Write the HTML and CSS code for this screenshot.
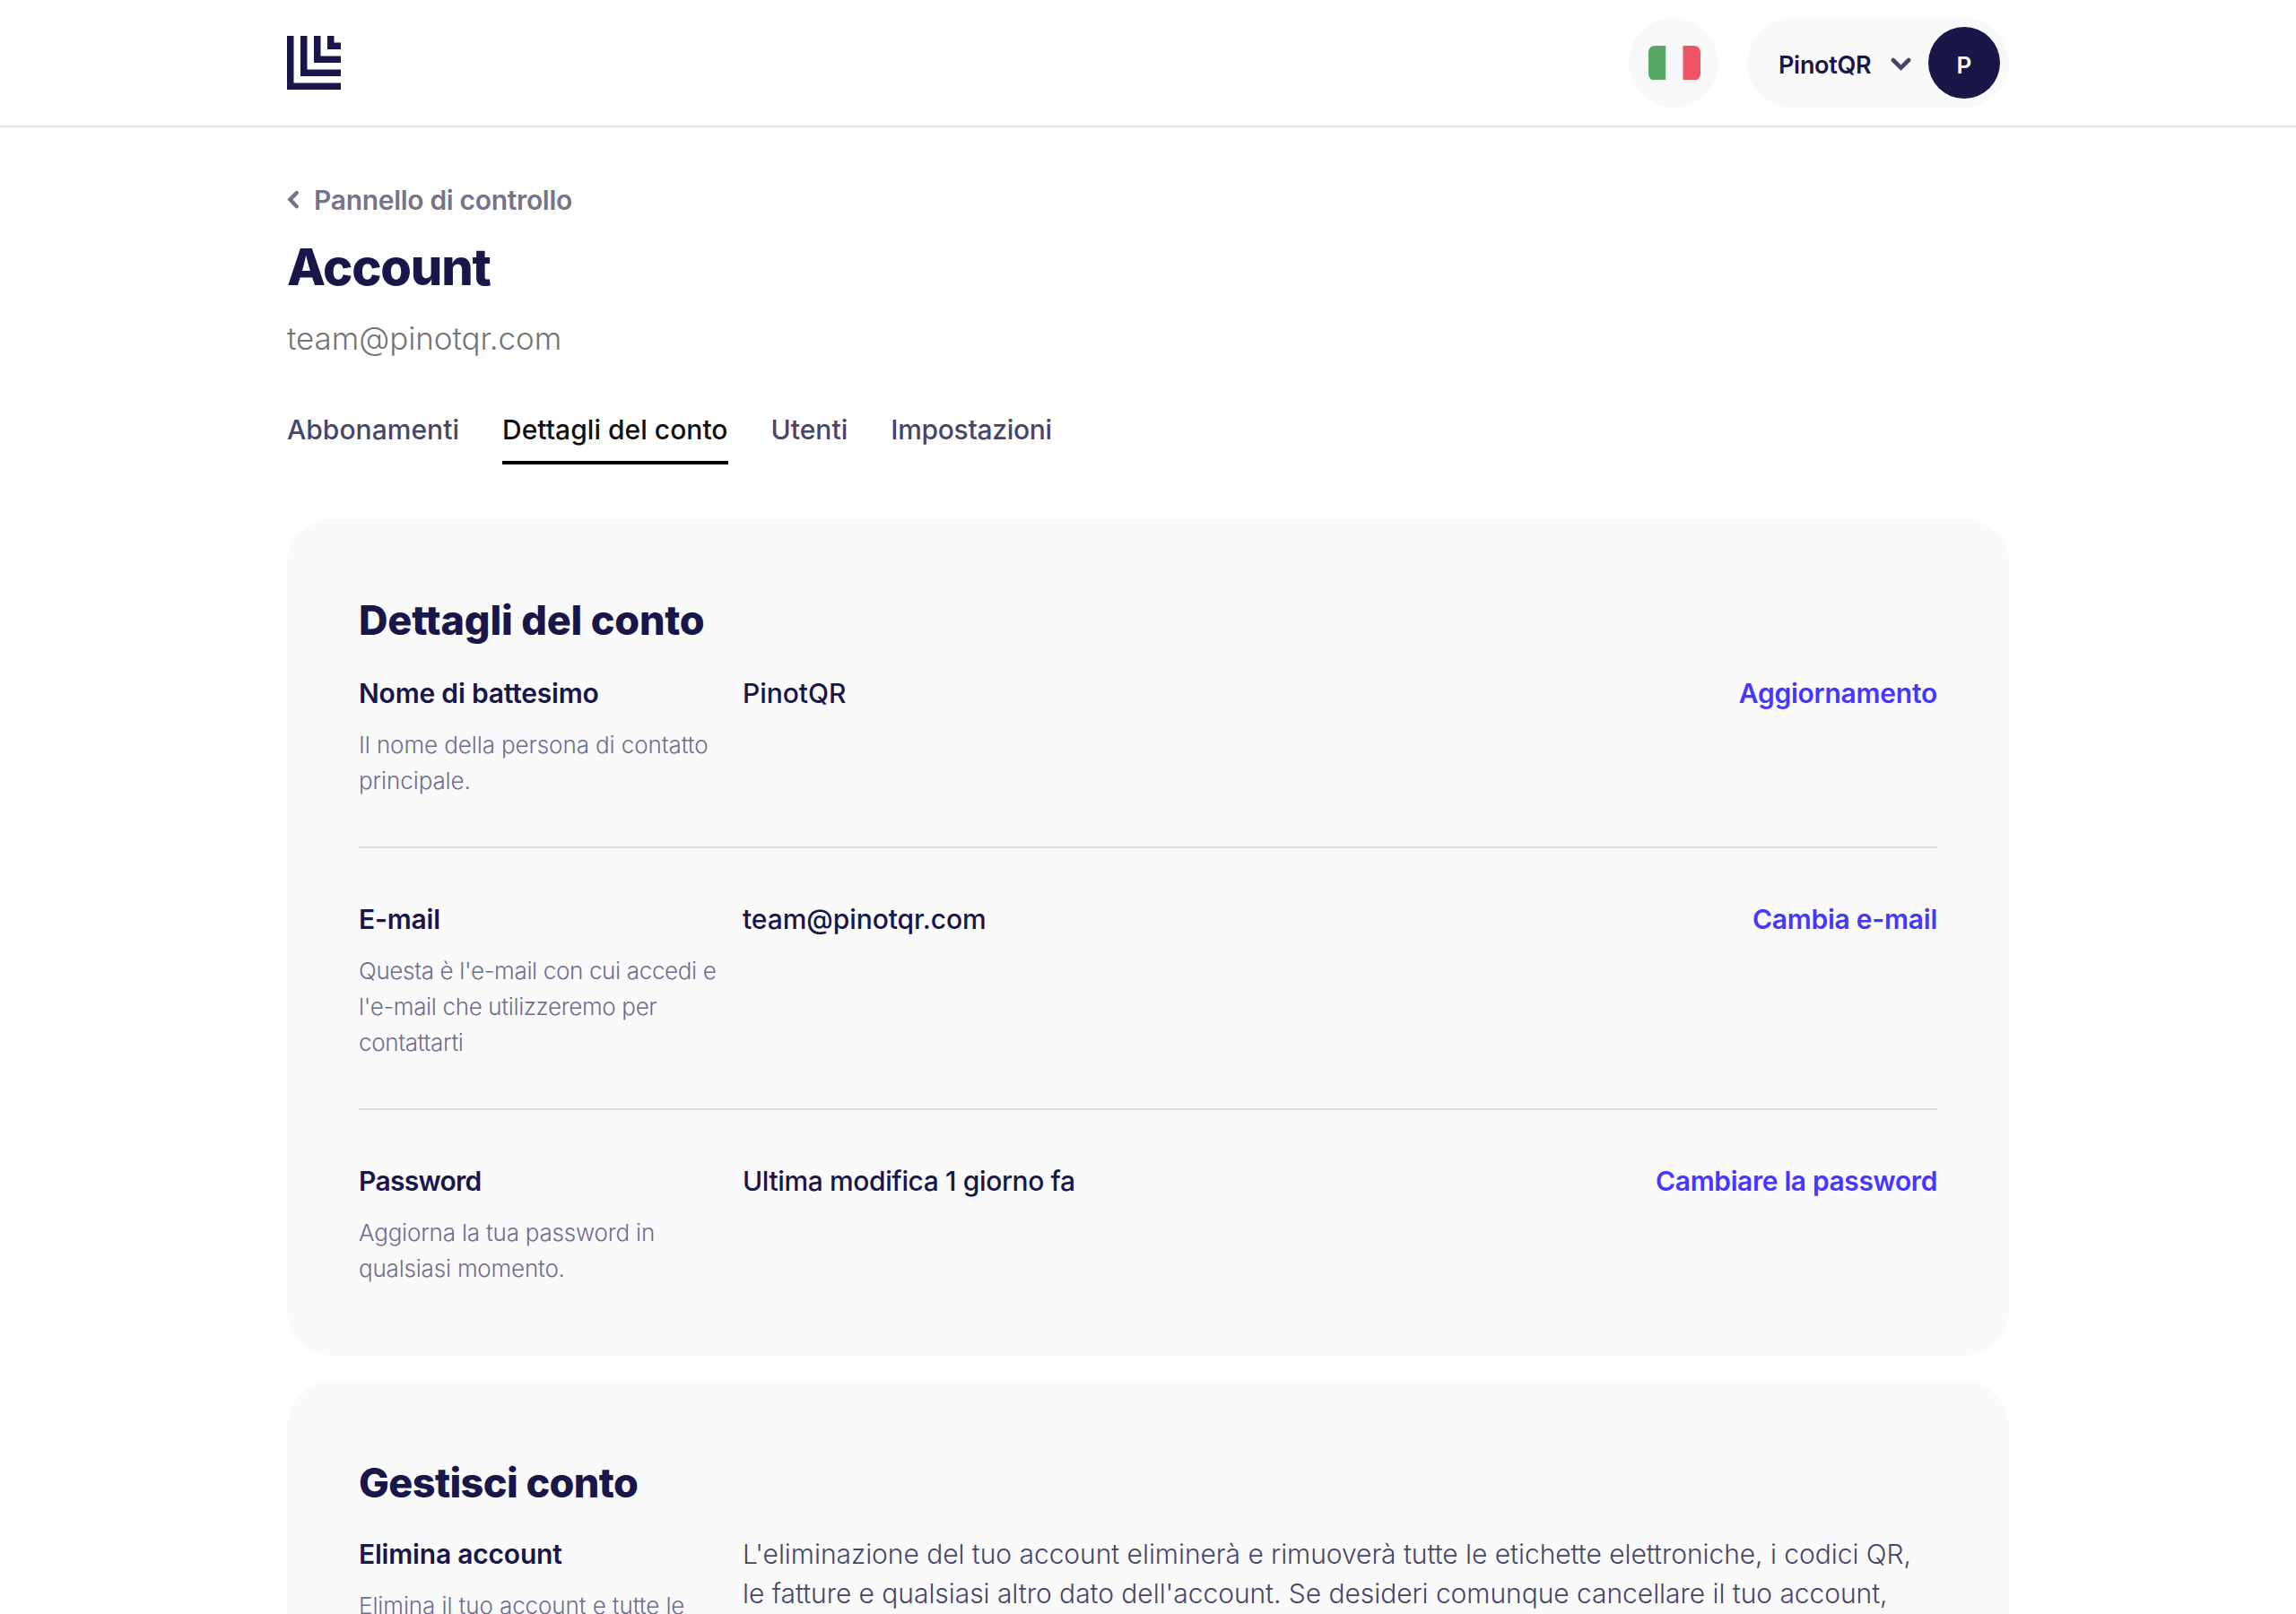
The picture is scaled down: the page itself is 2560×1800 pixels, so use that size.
FILE: index.html
```
<!DOCTYPE html>
<html lang="it">
<head>
  <meta charset="UTF-8" />
  <meta name="viewport" content="width=device-width, initial-scale=1.0"/>
  <title>Account</title>
  <link rel="stylesheet" href="styles.css">
</head>
<body>

  <header class="header">
    <a class="logo" href="#">
      <svg width="60" height="60" viewBox="0 0 60 60" fill="#19164a">
        <path d="M0 0h7.5v52.5H60V60H0z"/>
        <path d="M15 0h7.5v37.5H60V45H15z"/>
        <path d="M30 0h7.5v22.5H60V30H30z"/>
        <path d="M45 0h7.5v7.5H60V15H45z"/>
      </svg>
    </a>
    <div class="header-right">
      <button class="language">
        <svg width="58" height="38.5" viewBox="0 0 58 38.5">
          <path fill="#57a863" d="M7 0h12.5v38.5H7a7 7 0 0 1-7-7V7a7 7 0 0 1 7-7z"/>
          <path fill="#f5f7fb" d="M19.5 0h19v38.5h-19z"/>
          <path fill="#ee5564" d="M38.5 0H51a7 7 0 0 1 7 7v24.5a7 7 0 0 1-7 7H38.5z"/>
        </svg>
      </button>
      <button class="user-menu">
        <span class="user-name">PinotQR</span>
        <svg class="chevron" width="23" height="16" viewBox="0 0 23 16" fill="none" stroke="#484266" stroke-width="4.6" stroke-linecap="round">
          <path d="M2.8 3l8.7 8.6L20.2 3"/>
        </svg>
        <span class="avatar">P</span>
      </button>
    </div>
  </header>

  <main class="container">
    <a class="back" href="#">
      <svg width="14" height="22" viewBox="0 0 14 22" fill="none" stroke="#767489" stroke-width="4.4" stroke-linecap="round">
        <path d="M10.8 3L3.4 10.6l7.4 7.6"/>
      </svg>
      <span>Pannello di controllo</span>
    </a>
    <h1>Account</h1>
    <p class="email">team@pinotqr.com</p>

    <nav class="tabs">
      <a class="tab" href="#">Abbonamenti</a>
      <a class="tab active" href="#">Dettagli del conto</a>
      <a class="tab" href="#">Utenti</a>
      <a class="tab" href="#">Impostazioni</a>
    </nav>

    <section class="card">
      <h2>Dettagli del conto</h2>
      <div class="row">
        <div class="info">
          <h3>Nome di battesimo</h3>
          <p>Il nome della persona di contatto principale.</p>
        </div>
        <div class="value">PinotQR</div>
        <a class="action" href="#">Aggiornamento</a>
      </div>
      <div class="row">
        <div class="info long">
          <h3>E-mail</h3>
          <p>Questa è l'e-mail con cui accedi e l'e-mail che utilizzeremo per contattarti</p>
        </div>
        <div class="value">team@pinotqr.com</div>
        <a class="action" href="#">Cambia e-mail</a>
      </div>
      <div class="row password">
        <div class="info">
          <h3>Password</h3>
          <p>Aggiorna la tua password in qualsiasi momento.</p>
        </div>
        <div class="value">Ultima modifica 1 giorno fa</div>
        <a class="action" href="#">Cambiare la password</a>
      </div>
    </section>

    <section class="card manage">
      <h2>Gestisci conto</h2>
      <div class="row">
        <div class="info">
          <h3>Elimina account</h3>
          <p>Elimina il tuo account e tutte le</p>
        </div>
        <p class="text">L'eliminazione del tuo account eliminerà e rimuoverà tutte le etichette elettroniche, i codici QR, le fatture e qualsiasi altro dato dell'account. Se desideri comunque cancellare il tuo account,</p>
      </div>
    </section>
  </main>

</body>
</html>
```
FILE: styles.css
```
* {
  box-sizing: border-box;
  margin: 0;
  padding: 0;
}

body {
  height: 1800px;
  overflow: hidden;
  background-color: #fff;
  color: #19164a;
  font-family: Inter, sans-serif;
  font-size: 30px;
  line-height: 44px;
}

a {
  text-decoration: none;
}

button {
  border: none;
  font-family: inherit;
  color: inherit;
  background-color: #f9f9f9;
  cursor: pointer;
}

svg {
  display: block;
}

.header {
  display: flex;
  justify-content: space-between;
  align-items: center;
  height: 142px;
  padding: 0 320px;
  border-bottom: 2px solid #e5e5e5;
}

.header-right {
  display: flex;
  gap: 32px;
}

.language {
  display: flex;
  align-items: center;
  justify-content: center;
  width: 100px;
  height: 100px;
  padding-left: 2px;
  border-radius: 50%;
}

.user-menu {
  display: flex;
  align-items: center;
  width: 292px;
  height: 100px;
  padding: 0 10px 0 35px;
  border-radius: 50px;
}

.user-name {
  padding-top: 4px;
  font-size: 27px;
  font-weight: 600;
  letter-spacing: -0.3px;
}

.chevron {
  margin: 3px 19px 0 auto;
}

.avatar {
  width: 80px;
  height: 80px;
  padding-top: 4px;
  border-radius: 50%;
  background-color: #19164a;
  color: #fff;
  font-size: 26px;
  font-weight: 600;
  line-height: 78px;
  text-align: center;
}

.container {
  padding: 61px 320px 0;
}

.back {
  display: flex;
  align-items: center;
  gap: 16px;
  color: #767489;
  font-weight: 600;
  line-height: 40px;
  letter-spacing: -0.32px;
}

h1 {
  margin-top: 22px;
  font-size: 56px;
  font-weight: 800;
  line-height: 66px;
  letter-spacing: -1.2px;
}

.email {
  margin-top: 22px;
  color: #757575;
  font-size: 35px;
  font-weight: 300;
  line-height: 48px;
  letter-spacing: -0.08px;
}

.tabs {
  display: flex;
  gap: 48px;
  margin-top: 58px;
}

.tab {
  padding-bottom: 15px;
  border-bottom: 4px solid transparent;
  color: #484668;
  font-weight: 500;
  line-height: 40px;
  letter-spacing: 0.03px;
}

.tab:last-child {
  letter-spacing: -0.3px;
}

.tab.active {
  color: #111;
  border-color: #000;
}

.card {
  margin-top: 60px;
  padding: 84px 80px 77px;
  border-radius: 50px;
  background-color: #fafafa;
}

.card + .card {
  margin-top: 28px;
}

h2 {
  margin-bottom: 29px;
  font-size: 45px;
  font-weight: 800;
  line-height: 60px;
  letter-spacing: -0.2px;
}

.manage h2 {
  margin-bottom: 27px;
  letter-spacing: -0.6px;
}

.row {
  display: grid;
  grid-template-columns: 400px 1fr auto;
  column-gap: 28px;
}

.row + .row {
  margin-top: 53px;
  padding-top: 57px;
  border-top: 2px solid #dcdce2;
}

h3 {
  font-size: 30px;
  font-weight: 600;
  letter-spacing: -0.2px;
}

.info p {
  margin-top: 16px;
  color: #706d8c;
  font-size: 26px;
  font-weight: 300;
  line-height: 40px;
  letter-spacing: -0.1px;
}

.info.long p {
  letter-spacing: -0.35px;
}

.value {
  font-weight: 500;
  letter-spacing: -0.06px;
}

.action {
  color: #4736ff;
  font-weight: 600;
  letter-spacing: -0.25px;
}

.password h3 {
  letter-spacing: -0.7px;
}

.password p {
  letter-spacing: -0.2px;
}

.password .value,
.password .action {
  letter-spacing: -0.38px;
}

.text {
  grid-column: 2 / 4;
  color: #484668;
  font-weight: 300;
  letter-spacing: -0.05px;
}
```
